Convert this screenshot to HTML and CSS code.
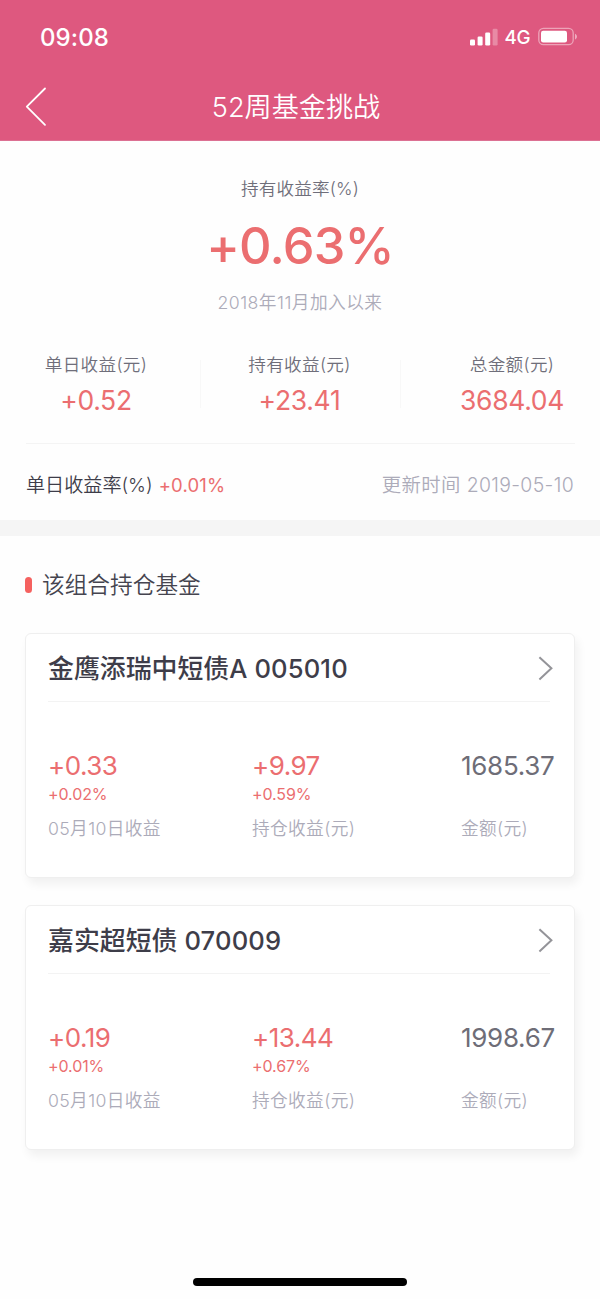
FILE: index.html
```html
<!DOCTYPE html>
<html lang="zh-CN">
<head>
<meta charset="utf-8">
<title>52周基金挑战</title>
<link rel="stylesheet" href="styles.css">
</head>
<body>
<header class="header">
  <div class="status">
    <span class="time">09:08</span>
    <div class="indicators">
      <svg class="signal" width="28" height="18" viewBox="0 0 28 18" fill="#fff"><rect x="0" y="11.5" width="5" height="6" rx="1.3"/><rect x="7.6" y="8.5" width="5" height="9" rx="1.3"/><rect x="15.2" y="4.5" width="5" height="13" rx="1.3"/><rect x="22.6" y="0.8" width="5" height="16.7" rx="1.3" opacity=".3"/></svg>
      <span class="network">4G</span>
      <svg class="battery" width="40" height="20" viewBox="0 0 40 20"><rect x=".8" y="1.3" width="34.4" height="16.4" rx="4.6" fill="none" stroke="#fff" stroke-opacity=".45" stroke-width="1.3"/><rect x="3" y="3.7" width="26" height="11.8" rx="2.2" fill="#fff"/><path d="M37 6.7c2.6 1 2.6 4.8 0 5.8z" fill="#fff" opacity=".5"/></svg>
    </div>
  </div>
  <div class="nav">
    <svg class="back" width="24" height="42" viewBox="0 0 24 42" fill="none" stroke="#fff" stroke-width="1.8" stroke-linecap="round" stroke-linejoin="round"><path d="M21 1.5L2.8 19.7L21 37.8"/></svg>
    <h1 class="title">52周基金挑战</h1>
  </div>
</header>
<section class="summary">
  <div class="label">持有收益率(%)</div>
  <div class="rate">+0.63%</div>
  <div class="since">2018年11月加入以来</div>
  <div class="stats">
    <div class="stat stat-first"><div class="label">单日收益(元)</div><div class="amount">+0.52</div></div>
    <div class="stat stat-middle"><div class="label">持有收益(元)</div><div class="amount">+23.41</div></div>
    <div class="stat stat-last"><div class="label">总金额(元)</div><div class="amount">3684.04</div></div>
  </div>
  <div class="daily">
    <div><span class="daily-label">单日收益率(%)</span><span class="daily-rate">+0.01%</span></div>
    <div class="updated"><span class="updated-label">更新时间</span><span class="date">2019-05-10</span></div>
  </div>
</section>
<main class="holdings">
  <h2 class="section-title">该组合持仓基金</h2>
  <article class="card">
    <div class="card-head"><h3 class="fund">金鹰添瑞中短债<span class="share">A</span><span class="code">005010</span></h3><svg width="16" height="26" viewBox="0 0 16 26" fill="none" stroke="#949499" stroke-width="2"><path d="M1.4 2.2L13.4 13.3L1.4 24.4"/></svg></div>
    <div class="figures">
      <div><div class="value">+0.33</div><div class="percent">+0.02%</div><div class="caption">05月10日收益</div></div>
      <div><div class="value">+9.97</div><div class="percent">+0.59%</div><div class="caption">持仓收益(元)</div></div>
      <div><div class="value total">1685.37</div><div class="percent"></div><div class="caption">金额(元)</div></div>
    </div>
  </article>
  <article class="card">
    <div class="card-head"><h3 class="fund">嘉实超短债<span class="code">070009</span></h3><svg width="16" height="26" viewBox="0 0 16 26" fill="none" stroke="#949499" stroke-width="2"><path d="M1.4 2.2L13.4 13.3L1.4 24.4"/></svg></div>
    <div class="figures">
      <div><div class="value">+0.19</div><div class="percent">+0.01%</div><div class="caption">05月10日收益</div></div>
      <div><div class="value">+13.44</div><div class="percent">+0.67%</div><div class="caption">持仓收益(元)</div></div>
      <div><div class="value total">1998.67</div><div class="percent"></div><div class="caption">金额(元)</div></div>
    </div>
  </article>
</main>
<footer class="home"><div class="home-bar"></div></footer>
</body>
</html>
```
FILE: styles.css
```css
* { box-sizing: border-box; }
body {
  margin: 0;
  width: 600px;
  height: 1299px;
  display: flex;
  flex-direction: column;
  background: #fefefe;
  font-family: Inter, "Noto Sans CJK SC", sans-serif;
  font-weight: 350;
  white-space: nowrap;
  overflow: hidden;
}
h1, h2, h3 { margin: 0; font-weight: inherit; }
svg { display: block; flex: none; }
.header { height: 141px; background: #de587f; color: #fff; border-bottom: 1px solid #dc7193; flex: none; }
.status { height: 74px; padding: 0 22px 0 40px; display: flex; justify-content: space-between; align-items: center; }
.time { font-size: 24px; font-weight: 550; letter-spacing: .1px; }
.indicators { display: flex; align-items: center; }
.network { margin: 0 7px 0 7px; font-size: 18.8px; font-weight: 450; width: 26.5px; letter-spacing: -.3px; }
.nav { height: 64px; padding: 0 24px; display: grid; grid-template-columns: 24px 1fr 24px; align-items: center; }
.title { text-align: center; font-size: 27.2px; line-height: 66px; margin-right: 10px; padding-left: 2px; padding-top: 1px; letter-spacing: -.05px; }
.summary { height: 395px; flex: none; padding: 33px 26px 0; border-bottom: 16px solid #f5f5f5; }
.label { font-size: 17.6px; line-height: 30px; color: #6f6e7a; text-align: center; letter-spacing: .15px; }
.rate { font-size: 50.5px; font-weight: 520; line-height: 66px; margin-top: 9px; color: #eb6e70; text-align: center; letter-spacing: -.8px; }
.since { margin-top: 7px; font-size: 17.7px; line-height: 34px; color: #acabb9; text-align: center; letter-spacing: .45px; }
.stats { margin: 29px -26px 0; height: 95px; display: grid; grid-template-columns: 200px 201px 199px; background: linear-gradient(#f4f4f4, #f4f4f4) 26px 94px / 549px 1px no-repeat; }
.stat { height: 60px; padding-top: 1px; }
.stat .label { letter-spacing: .3px; }
.stat-first { padding-right: 8px; }
.stat-middle { padding-right: 2px; background: linear-gradient(#f8f8f8, #f8f8f8) 0 11px / 1px 48px no-repeat, linear-gradient(#f8f8f8, #f8f8f8) 100% 11px / 1px 48px no-repeat; }
.stat-last { padding-left: 23px; }
.amount { margin-top: 2px; font-size: 26.5px; line-height: 36px; font-weight: 400; color: #eb6e70; text-align: center; letter-spacing: -.3px; }
.daily { height: 76px; padding-top: 3px; display: flex; justify-content: space-between; align-items: center; }
.daily-label { font-size: 19.1px; color: #3e3d49; }
.daily-rate { margin-left: 6px; font-size: 18.5px; font-weight: 400; color: #eb6e70; letter-spacing: .15px; }
.updated { font-size: 19.4px; color: #acabb9; letter-spacing: .35px; }
.date { margin-left: 6px; }
.holdings { flex: 1; padding: 26px 25px 0 25px; }
.section-title { display: flex; align-items: center; gap: 10px; font-size: 22.7px; line-height: 46px; height: 45px; color: #45444f; }
.section-title::before { content: ""; width: 7px; height: 16px; border-radius: 3.5px; background: #f5615f; }
.card { height: 245px; margin-top: 27px; border: 1px solid #efefef; border-radius: 6px; background: #fff; box-shadow: 3px 6px 10px rgba(0, 0, 0, .055); }
.section-title + .card { margin-top: 26px; }
.card-head { margin: 0 20px 0 22px; height: 68px; display: flex; align-items: center; justify-content: space-between; background: linear-gradient(#f3f3f3, #f3f3f3) 0 100% / 502px 1px no-repeat; }
.fund { font-size: 25.9px; line-height: 60px; padding-top: 2px; font-weight: 500; color: #3e3d49; }
.share, .code { font-size: 25.6px; font-weight: 550; }
.code { margin-left: 7px; letter-spacing: .15px; }
.figures { margin: 46px 0 0 22px; display: grid; grid-template-columns: 204px 209px 1fr; color: #eb6e70; }
.value { font-size: 26px; line-height: 36px; font-weight: 400; letter-spacing: -.5px; }
.total { color: #6e6d77; letter-spacing: -.3px; }
.percent { height: 22px; line-height: 21px; font-size: 16px; font-weight: 400; letter-spacing: -.1px; }
.caption { margin-top: 6px; font-size: 17.7px; line-height: 34px; color: #acabb9; letter-spacing: .35px; }
.home { height: 25px; flex: none; display: flex; justify-content: center; }
.home-bar { width: 214px; height: 8px; margin-top: 4px; border-radius: 4px; background: #000; }
```
